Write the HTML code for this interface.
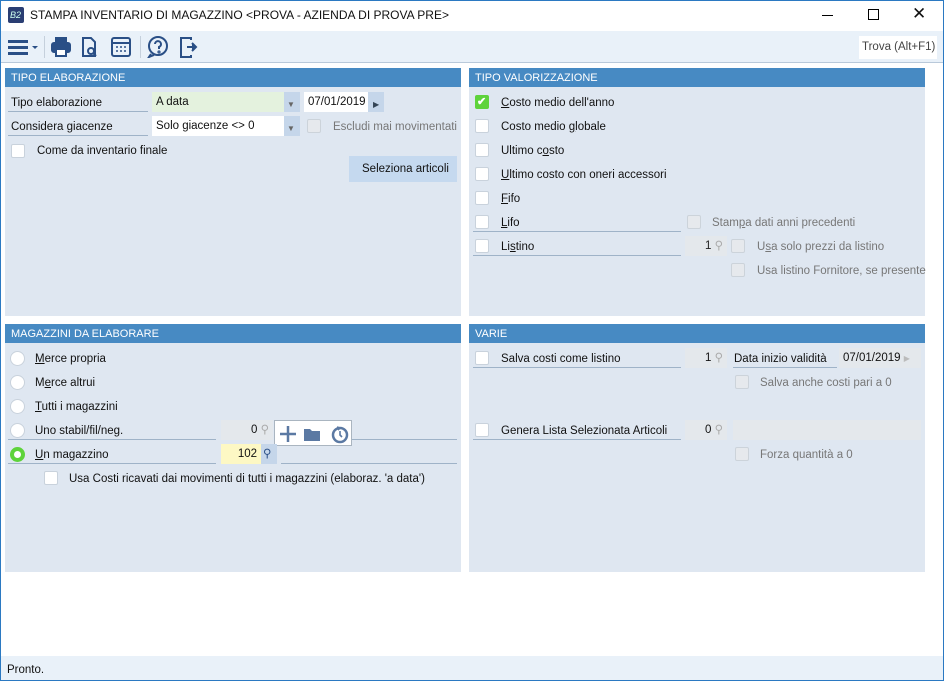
<!DOCTYPE html><html><head><meta charset="utf-8"><style>
*{box-sizing:border-box;margin:0;padding:0}
body{width:944px;height:681px;position:relative;background:#fff;font-family:"Liberation Sans",sans-serif;font-size:11.5px;line-height:13px;color:#111;overflow:hidden;}
.bd{position:absolute;left:0;top:0;width:944px;height:681px;border:1px solid #2b79c2;pointer-events:none;z-index:9}
.a{position:absolute;white-space:nowrap}
.panel{position:absolute;background:#dfe7f1}
.hdr{position:absolute;left:0;right:0;top:0;height:19px;background:#478ac3;color:#fff;padding:4px 0 0 6px;font-size:11px}
.cb{position:absolute;width:14px;height:14px;background:#fff;border:1px solid #c9d2dc;border-radius:2px}
.cbd{position:absolute;width:14px;height:14px;background:#e6e9ed;border:1px solid #ccd3da;border-radius:2px}
.rd{position:absolute;width:15px;height:15px;background:#fff;border:1px solid #c9d2dc;border-radius:50%}
.ln{position:absolute;height:1px;background:#9fb3c8}
.fld{position:absolute;height:20px;padding:4px 4px}
.dis{color:#777}
u{text-decoration:underline}
</style></head><body>
<div class="bd"></div>
<!-- title -->
<div class="a" style="left:8px;top:7px;width:16px;height:16px;background:#2a3e73;border-radius:2px;color:#cfe;font-size:9px;line-height:10px;font-style:italic;padding:3px 0 0 2px">B2</div>
<div class="a" style="left:30px;top:9px;font-size:12px">STAMPA INVENTARIO DI MAGAZZINO &lt;PROVA - AZIENDA DI PROVA PRE&gt;</div>
<div class="a" style="left:822px;top:15px;width:11px;height:1px;background:#000"></div>
<div class="a" style="left:868px;top:9px;width:11px;height:11px;border:1px solid #000"></div>
<div class="a" style="left:912px;top:5px;font-size:17px;line-height:18px">✕</div>
<!-- toolbar -->
<div class="a" style="left:0;top:31px;width:944px;height:31px;background:#e9f1f9"></div>
<svg class="a" style="left:8px;top:36px" width="34" height="22"><g fill="#2a4f86"><rect x="0" y="4" width="20" height="3"/><rect x="0" y="10" width="20" height="3"/><rect x="0" y="16" width="20" height="3"/><path d="M24 10h6l-3 3z"/></g></svg>
<div class="a" style="left:44px;top:36px;width:1px;height:22px;background:#c5d0dc"></div>
<svg class="a" style="left:50px;top:36px" width="100" height="22" fill="none" stroke="#2a4f86" stroke-width="2"><rect x="6" y="2" width="10" height="5" fill="#2a4f86"/><rect x="2" y="7" width="18" height="9" rx="2" fill="#2a4f86"/><rect x="6" y="13" width="10" height="7" fill="#fff"/><path d="M33 2h8l4 4v14h-12z"/><circle cx="41" cy="15" r="3"/><path d="M43 17l3 3"/><rect x="62" y="2" width="18" height="18" rx="2"/><path d="M62 7h18" /><g stroke-width="1.5"><path d="M66 11h2M70 11h2M74 11h2M66 15h2M70 15h2M74 15h2"/></g></svg>
<div class="a" style="left:140px;top:36px;width:1px;height:22px;background:#c5d0dc"></div>
<svg class="a" style="left:147px;top:36px" width="56" height="22" fill="none" stroke="#2a4f86" stroke-width="2"><circle cx="11" cy="10" r="9"/><path d="M8 8a3 3 0 1 1 4 3v2"/><circle cx="12" cy="16" r="0.6"/><path d="M4 18l-2 3 5-2"/><path d="M44 4v-2h-10v19h10v-2"/><path d="M40 11h8M45 7l4 4-4 4" fill="#2a4f86"/></svg>
<div class="a" style="left:859px;top:36px;width:78px;height:23px;background:#fff;padding:5px 0 0 3px;color:#444">Trova (Alt+F1)</div>
<div class="a" style="left:0;top:62px;width:944px;height:1px;background:#b9c9da"></div>

<!-- TIPO ELABORAZIONE -->
<div class="panel" style="left:5px;top:68px;width:456px;height:248px"><div class="hdr">TIPO ELABORAZIONE</div></div>
<div class="a" style="left:11px;top:97px">Tipo elaborazione</div><div class="ln" style="left:8px;top:111px;width:140px"></div>
<div class="fld" style="left:152px;top:92px;width:132px;background:#e4f2de">A data</div>
<div class="fld" style="left:284px;top:92px;width:16px;background:#c5d6ea;color:#666;font-size:8px;padding:6px 3px">▼</div>
<div class="fld" style="left:304px;top:92px;width:64px;background:#fff">07/01/2019</div>
<div class="fld" style="left:368px;top:92px;width:16px;background:#c5d6ea;font-size:8px;padding:6px 5px;color:#345">▶</div>
<div class="a" style="left:11px;top:121px">Considera giacenze</div><div class="ln" style="left:8px;top:135px;width:140px"></div>
<div class="fld" style="left:152px;top:116px;width:132px;background:#fff">Solo giacenze &lt;&gt; 0</div>
<div class="fld" style="left:284px;top:116px;width:16px;background:#c5d6ea;color:#666;font-size:8px;padding:6px 3px">▼</div>
<div class="cbd" style="left:307px;top:119px"></div><div class="a dis" style="left:333px;top:121px">Escludi mai movimentati</div>
<div class="cb" style="left:11px;top:144px"></div><div class="a" style="left:37px;top:145px">Come da inventario finale</div>
<div class="a" style="left:349px;top:156px;width:108px;height:26px;background:#c5d9ef;padding:7px 0 0 13px">Seleziona articoli</div>

<!-- TIPO VALORIZZAZIONE -->
<div class="panel" style="left:469px;top:68px;width:456px;height:248px"><div class="hdr">TIPO VALORIZZAZIONE</div></div>
<div class="a" style="left:475px;top:95px;width:14px;height:14px;background:#5ed33b;border-radius:2px;color:#fff;font-size:11px;font-weight:bold;padding:1px 0 0 2px">✔</div>
<div class="a" style="left:501px;top:97px"><u>C</u>osto medio dell'anno</div>
<div class="cb" style="left:475px;top:119px"></div><div class="a" style="left:501px;top:121px">Costo medio <u>g</u>lobale</div>
<div class="cb" style="left:475px;top:143px"></div><div class="a" style="left:501px;top:145px">Ultimo c<u>o</u>sto</div>
<div class="cb" style="left:475px;top:167px"></div><div class="a" style="left:501px;top:169px"><u>U</u>ltimo costo con oneri accessori</div>
<div class="cb" style="left:475px;top:191px"></div><div class="a" style="left:501px;top:193px"><u>F</u>ifo</div>
<div class="cb" style="left:475px;top:215px"></div><div class="a" style="left:501px;top:217px"><u>L</u>ifo</div><div class="ln" style="left:473px;top:231px;width:208px"></div>
<div class="cbd" style="left:687px;top:215px"></div><div class="a dis" style="left:712px;top:217px">Stam<u>p</u>a dati anni precedenti</div>
<div class="cb" style="left:475px;top:239px"></div><div class="a" style="left:501px;top:241px">Li<u>s</u>tino</div><div class="ln" style="left:473px;top:255px;width:208px"></div>
<div class="fld" style="left:685px;top:236px;width:42px;background:#e4e8ec;text-align:right;color:#222">1 <span style="color:#aaa">⚲</span></div>
<div class="cbd" style="left:731px;top:239px"></div><div class="a dis" style="left:757px;top:241px">U<u>s</u>a solo prezzi da listino</div>
<div class="cbd" style="left:731px;top:263px"></div><div class="a dis" style="left:757px;top:265px">Usa listino Fornitore, se presente</div>

<!-- MAGAZZINI -->
<div class="panel" style="left:5px;top:324px;width:456px;height:248px"><div class="hdr">MAGAZZINI DA ELABORARE</div></div>
<div class="rd" style="left:10px;top:351px"></div><div class="a" style="left:35px;top:353px"><u>M</u>erce propria</div>
<div class="rd" style="left:10px;top:375px"></div><div class="a" style="left:35px;top:377px">M<u>e</u>rce altrui</div>
<div class="rd" style="left:10px;top:399px"></div><div class="a" style="left:35px;top:401px"><u>T</u>utti i magazzini</div>
<div class="rd" style="left:10px;top:423px"></div><div class="a" style="left:35px;top:425px">Uno stabil/fil/neg.</div><div class="ln" style="left:8px;top:439px;width:208px"></div>
<div class="fld" style="left:221px;top:420px;width:52px;background:#e4e8ec;text-align:right">0 <span style="color:#aaa">⚲</span></div>
<div class="a" style="left:274px;top:420px;width:78px;height:26px;background:#fff;border:1px solid #aab5c0"></div>
<svg class="a" style="left:278px;top:424px" width="72" height="20" fill="none" stroke="#5b79a3" stroke-width="2.5"><path d="M10 2v16M2 10h16"/><path d="M26 5h6l2 2h8v10h-16z" fill="#5b79a3" stroke="none"/><circle cx="62" cy="11" r="7"/><path d="M62 7v4l2 2M59 3l3 1-2 2" stroke-width="1.6"/></svg>
<div class="ln" style="left:352px;top:439px;width:105px"></div>
<div class="a" style="left:10px;top:447px;width:15px;height:15px;border-radius:50%;background:#5ed33b"><div style="margin:4px;width:7px;height:7px;border-radius:50%;background:#fff"></div></div>
<div class="a" style="left:35px;top:449px"><u>U</u>n magazzino</div><div class="ln" style="left:8px;top:463px;width:208px"></div>
<div class="fld" style="left:221px;top:444px;width:40px;background:#fdf8c4;text-align:right">102</div>
<div class="fld" style="left:261px;top:444px;width:16px;background:#c5d6ea;padding:4px 2px;color:#2a4f86">⚲</div>
<div class="ln" style="left:281px;top:463px;width:176px"></div>
<div class="cb" style="left:44px;top:471px"></div><div class="a" style="left:69px;top:473px">Usa Costi ricavati dai movimenti di tutti i magazzini (elaboraz. 'a data')</div>

<!-- VARIE -->
<div class="panel" style="left:469px;top:324px;width:456px;height:248px"><div class="hdr">VARIE</div></div>
<div class="cb" style="left:475px;top:351px"></div><div class="a" style="left:501px;top:353px">Salva costi come listino</div><div class="ln" style="left:473px;top:367px;width:208px"></div>
<div class="fld" style="left:685px;top:348px;width:42px;background:#e4e8ec;text-align:right">1 <span style="color:#aaa">⚲</span></div>
<div class="a" style="left:734px;top:353px">Data inizio validità</div><div class="ln" style="left:733px;top:367px;width:104px"></div>
<div class="fld" style="left:839px;top:348px;width:82px;background:#e4e8ec">07/01/2019 <span style="color:#bbb;font-size:8px">▶</span></div>
<div class="cbd" style="left:735px;top:375px"></div><div class="a dis" style="left:760px;top:377px">Salva anche costi pari a 0</div>
<div class="cb" style="left:475px;top:423px"></div><div class="a" style="left:501px;top:425px">Genera Lista Selezionata Articoli</div><div class="ln" style="left:473px;top:439px;width:208px"></div>
<div class="fld" style="left:685px;top:420px;width:42px;background:#e4e8ec;text-align:right">0 <span style="color:#aaa">⚲</span></div>
<div class="fld" style="left:733px;top:420px;width:188px;background:#e4e8ec"></div>
<div class="cbd" style="left:735px;top:447px"></div><div class="a dis" style="left:760px;top:449px">Forza quantità a 0</div>

<!-- status -->
<div class="a" style="left:0;top:656px;width:944px;height:25px;background:#e9f1f9"></div>
<div class="a" style="left:7px;top:664px">Pronto.</div>
</body></html>
